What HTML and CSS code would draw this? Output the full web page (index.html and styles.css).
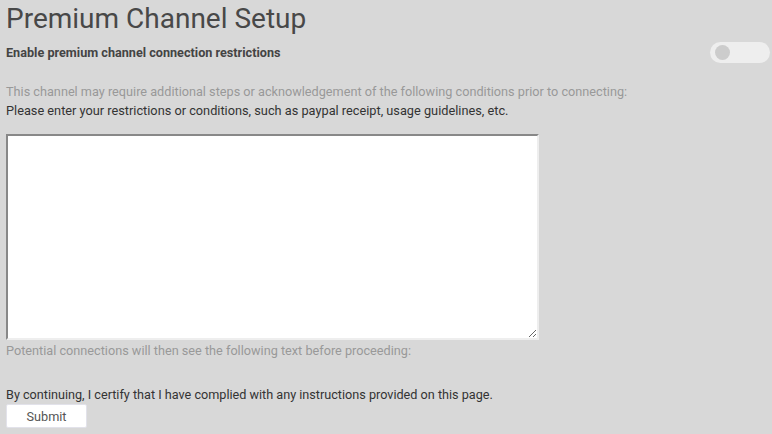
FILE: index.html
```html
<!DOCTYPE html>
<html>
<head>
<meta charset="utf-8">
<link rel="stylesheet" href="styles.css">
</head>
<body>
<div class="page">
  <h1 class="title">Premium Channel Setup</h1>
  <div class="enable-row">
    <span class="enable-label">Enable premium channel connection restrictions</span>
    <span class="toggle"><span class="knob"></span></span>
  </div>
  <p class="hint">This channel may require additional steps or acknowledgement of the following conditions prior to connecting:</p>
  <p class="instr">Please enter your restrictions or conditions, such as paypal receipt, usage guidelines, etc.</p>
  <textarea class="conditions"></textarea>
  <p class="hint after">Potential connections will then see the following text before proceeding:</p>
  <p class="certify">By continuing, I certify that I have complied with any instructions provided on this page.</p>
  <button class="submit">Submit</button>
</div>
</body>
</html>
```
FILE: styles.css
```css
html, body {
  margin: 0;
  padding: 0;
  background: #d8d8d8;
}
body {
  font-family: Roboto, "Liberation Sans", sans-serif;
  color: #333;
}
.page {
  padding: 0 2px 0 6px;
  display: flex;
  flex-direction: column;
  align-items: flex-start;
}
.title {
  margin: 2px 0 0 0;
  font-size: 28px;
  font-weight: 400;
  line-height: 33px;
  color: #484848;
}
.enable-row {
  align-self: stretch;
  display: flex;
  justify-content: space-between;
  align-items: center;
  margin-top: 7px;
}
.enable-label {
  font-size: 12.65px;
  font-weight: 700;
  color: #444;
}
.toggle {
  width: 60px;
  height: 21px;
  border-radius: 11px;
  background: #eeeeee;
  display: flex;
  align-items: center;
  padding-left: 5px;
  box-sizing: border-box;
}
.knob {
  width: 15px;
  height: 15px;
  border-radius: 50%;
  background: #cccccc;
}
.hint {
  margin: 19px 0 0 0;
  font-size: 12.7px;
  line-height: 19px;
  color: #999;
}
.instr {
  margin: 0;
  font-size: 12.75px;
  line-height: 19px;
  color: #333;
}
.conditions {
  margin-top: 14px;
  width: 533px;
  height: 206px;
  box-sizing: border-box;
  border-style: solid;
  border-width: 2px;
  border-top-color: #888;
  border-left-color: #888;
  border-right-color: #eee;
  border-bottom-color: #eee;
  background: #fff;
  padding: 2px;
  resize: both;
  outline: none;
}
.hint.after {
  margin-top: 1px;
}
.certify {
  margin: 25px 0 0 0;
  font-size: 12.65px;
  line-height: 19px;
  color: #333;
}
.submit {
  margin-top: 0;
  width: 81px;
  height: 24px;
  background: #fff;
  border: 1px solid #e2e2ea;
  border-radius: 2px;
  font-family: Roboto, "Liberation Sans", sans-serif;
  font-size: 12.7px;
  color: #555;
  padding: 0;
}
```
